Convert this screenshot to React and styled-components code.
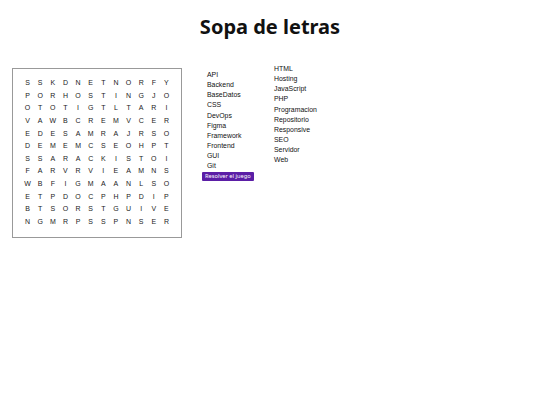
import React from "react";
import styled, { createGlobalStyle } from "styled-components";

const Global = createGlobalStyle`
  body { margin: 0; background: #fff; font-family: "Liberation Sans", Arial, sans-serif; }
`;

const Page = styled.div`
  padding: 14px 12px;
`;

const Title = styled.h1`
  margin: 0 0 28px;
  text-align: center;
  font-family: "Noto Sans", sans-serif;
  font-weight: 700;
  font-size: 20px;
  line-height: 26px;
  color: #111;
`;

const Main = styled.div`
  display: flex;
  align-items: flex-start;
`;

const Board = styled.div`
  width: 168px;
  height: 168px;
  border: 1px solid #999;
  box-sizing: content-box;
  display: flex;
  align-items: center;
  justify-content: center;
`;

const Grid = styled.div`
  display: grid;
  grid-template-columns: repeat(12, 12.64px);
  grid-auto-rows: 12.64px;
  margin-top: -2px;
`;

const Cell = styled.span`
  display: flex;
  align-items: center;
  justify-content: center;
  font-size: 7px;
  color: #222;
`;

const Side = styled.div`
  display: flex;
  margin-left: 20px;
  margin-top: -4px;
`;

const Column = styled.ul`
  list-style: none;
  margin: ${(p) => (p.$offset ? "6px 0 0" : "0")};
  padding: 0;
  width: ${(p) => p.$w}px;
  display: flex;
  flex-direction: column;
  align-items: flex-start;
`;

const Word = styled.li`
  font-size: 6.9px;
  line-height: 10.15px;
  color: #111;
  padding-left: 5px;
`;

const SolveButton = styled.button`
  margin-top: 0;
  background: #5b1ea6;
  color: #fff;
  border: none;
  border-radius: 1px;
  font-family: "Noto Sans", sans-serif;
  font-size: 5.7px;
  line-height: 9px;
  padding: 0 3px;
  cursor: pointer;
`;

const rows = [
  "SSKDNETNORFY",
  "PORHOSTINGJO",
  "OTOTIGTLTARI",
  "VAWBCREMVCER",
  "EDESAMRAJRSO",
  "DEMEMCSEOHPT",
  "SSARACKISTOI",
  "FARVRVIEAMNS",
  "WBFIGMAANLSO",
  "ETPDOCPHPDIP",
  "BTSORSTGUIVE",
  "NGMRPSSPNSER",
];

const col1 = ["API", "Backend", "BaseDatos", "CSS", "DevOps", "Figma", "Framework", "Frontend", "GUI", "Git"];
const col2 = ["HTML", "Hosting", "JavaScript", "PHP", "Programacion", "Repositorio", "Responsive", "SEO", "Servidor", "Web"];

export default function App() {
  return (
    <Page>
      <Global />
      <Title>Sopa de letras</Title>
      <Main>
        <Board>
          <Grid>
            {rows.map((r, i) =>
              r.split("").map((c, j) => <Cell key={`${i}-${j}`}>{c}</Cell>)
            )}
          </Grid>
        </Board>
        <Side>
          <Column $w={67} $offset>
            {col1.map((w) => (
              <Word key={w}>{w}</Word>
            ))}
            <SolveButton>Resolver el juego</SolveButton>
          </Column>
          <Column $w={80}>
            {col2.map((w) => (
              <Word key={w}>{w}</Word>
            ))}
          </Column>
        </Side>
      </Main>
    </Page>
  );
}
